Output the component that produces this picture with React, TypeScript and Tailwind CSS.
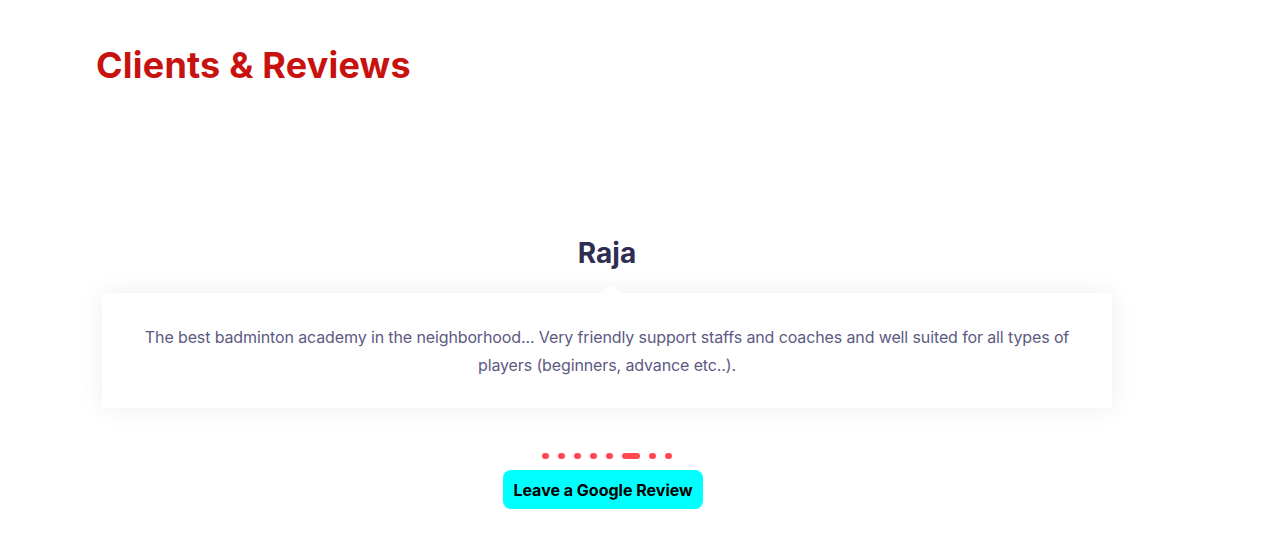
import React from "react";

export default function App() {
  const dots = [0, 1, 2, 3, 4, 5, 6, 7];
  return (
    <div className="w-[1271px] h-[539px] bg-white overflow-hidden" style={{ fontFamily: "Inter, 'Noto Sans', sans-serif" }}>
      <div className="pl-[96px] pt-[42px]">
        <h2 className="text-[36px] leading-[46px] font-bold text-[#c8120f] tracking-[0.2px]">Clients &amp; Reviews</h2>
      </div>
      <div className="ml-[102px] w-[1010px] mt-[148px] flex flex-col items-center">
        <div className="text-[28px] leading-[34px] font-bold text-[#2f2d52]">Raja</div>
        <div className="relative mt-[23px] w-full bg-white shadow-[0_0_24px_rgba(0,0,0,0.07)] px-[36px] pt-[30px] pb-[29px]">
          <div className="absolute left-1/2 -top-[9px] -translate-x-[6px] w-0 h-0 border-l-[10px] border-r-[10px] border-b-[9px] border-l-transparent border-r-transparent border-b-white" />
          <p className="text-center text-[16px] leading-[28px] text-[#5c5a82] tracking-[-0.12px]">
            The best badminton academy in the neighborhood... Very friendly support staffs and coaches and well suited for all types of players (beginners, advance etc..).
          </p>
        </div>
        <div className="mt-[45px] flex items-center gap-[9px]">
          {dots.map((d) =>
            d === 5 ? (
              <span key={d} className="block w-[18px] h-[6px] rounded-full bg-[#ff4a4d]" />
            ) : (
              <span key={d} className="block w-[7px] h-[6px] rounded-full bg-[#ff4a4d]" />
            )
          )}
        </div>
        <button className="mt-[11px] h-[39px] px-[10px] rounded-[8px] bg-[#00ffff] text-black text-[16px] font-bold -translate-x-[4px]">
          Leave a Google Review
        </button>
      </div>
    </div>
  );
}
